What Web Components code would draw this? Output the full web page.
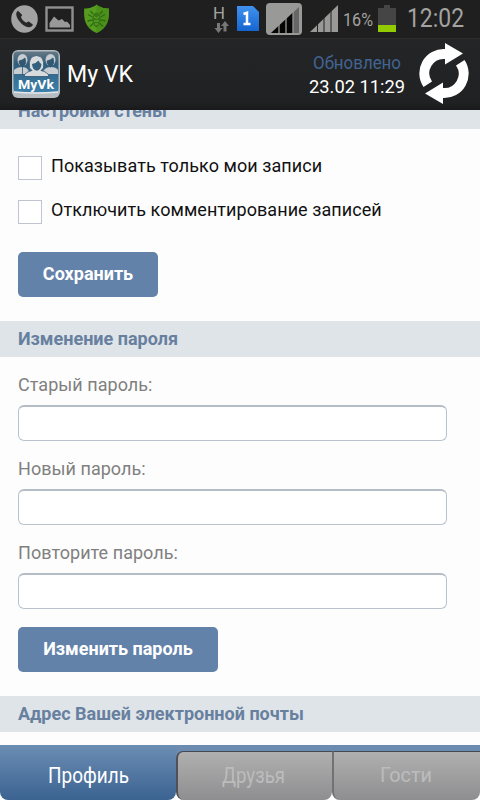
<!DOCTYPE html>
<html lang="ru">
<head>
<meta charset="UTF-8">
<title>My VK</title>
<style>
    body {
        margin: 0;
        width: 480px;
        height: 800px;
        overflow: hidden;
        background: #fdfdfd;
        font-family: Roboto, "Noto Sans", sans-serif;
    }
</style>
</head>
<body>
<vk-app></vk-app>

<script>
// Text stretched to a given width, used for all the system-font labels
class HandText extends HTMLElement {
    constructor() {
        super();
        this.attachShadow({ mode: 'open' });
    }

    connectedCallback() {
        const width = Number(this.getAttribute('width'));
        const size = Number(this.getAttribute('size'));
        const height = Math.round(size * 1.3);

        this.shadowRoot.innerHTML = `
            <style>
                :host {
                    display: block;
                    width: ${width}px;
                    height: ${height}px;
                }
                svg {
                    display: block;
                    overflow: visible;
                }
                text {
                    fill: currentColor;
                    font: 400 ${size}px Roboto, "Noto Sans", sans-serif;
                }
            </style>
            <svg width="${width}" height="${height}">
                <text x="0" y="${size}" textLength="${width}" lengthAdjust="spacingAndGlyphs">${this.getAttribute('text')}</text>
            </svg>
        `;
    }
}
customElements.define('hand-text', HandText);

class StatusBar extends HTMLElement {
    constructor() {
        super();
        this.attachShadow({ mode: 'open' });
    }

    connectedCallback() {
        this.shadowRoot.innerHTML = `
            <style>
                :host {
                    display: flex;
                    justify-content: space-between;
                    height: 38px;
                    box-sizing: border-box;
                    padding: 0 16px 0 11px;
                    background: #1f1f1f;
                    color: #a3a3a1;
                }
                .group {
                    display: flex;
                    align-items: flex-start;
                }
                svg {
                    display: block;
                    flex: none;
                }
                .phone { margin-top: 5px; }
                .picture { margin: 6px 0 0 7px; }
                .shield { margin: 4px 0 0 9px; }
                .data {
                    width: 17px;
                    margin: 2px 7px 0 0;
                }
                .data svg { margin-top: -3px; }
                .sim { margin: 6px 7px 0 0; }
                .signal-box { margin: 3px 8px 0 0; }
                .signal { margin: 5px 5px 0 0; }
                .percent { margin: 7px 5px 0 0; }
                .battery { margin: 5px 11px 0 0; }
                .clock { margin-top: 2px; }
            </style>
            <div class="group">
                <svg class="phone" width="27" height="28" viewBox="0 0 27 28">
                    <ellipse cx="13.500" cy="14" rx="13.300" ry="13.800" fill="#a3a3a3"/>
                    <path d="M7 5.800 C4.500 7.500 4.800 11 7.500 15 C10.500 19.500 15 22.500 18.500 22.200 C20.500 22 22 20.500 21.800 19.500 L17.800 16.600 C16.600 16.300 16.200 18 15 17.600 C12.700 16.500 10.500 14 9.900 12 C10 11.200 11.400 11 11 9.800 Z" fill="#272727"/>
                </svg>
                <svg class="picture" width="29" height="26" viewBox="0 0 29 26">
                    <rect x="1.500" y="1.500" width="26" height="23" fill="none" stroke="#909090" stroke-width="2.400"/>
                    <path d="M4.500 21.500 V17 L9 10.500 L13.500 14.500 L17 13 L20 16 L22 15.500 L25 19 V21.500 Z" fill="#999"/>
                </svg>
                <svg class="shield" width="27" height="30" viewBox="0 0 27 30">
                    <path d="M13.500 .5 C16 3 21 4.500 25.800 4.500 C26.500 15 25 24 13.500 29 C2 24 .5 15 1.200 4.500 C6 4.500 11 3 13.500 .5 Z" fill="#559c20"/>
                    <path d="M13.500 .5 C16 3 21 4.500 25.800 4.500 C26.500 15 25 24 13.500 29 Z" fill="#4a9019"/>
                    <path d="M10.500 10 Q13.500 7 16.500 10 L18 16 Q17 22 13.500 23.500 Q10 22 9 16 Z" fill="#387815"/>
                    <path d="M10 10 L7.500 7 M17 10 L19.500 7 M9.500 13 L5 10.500 M17.500 13 L22 10.500 M9 16 L4.500 17 M18 16 L22.500 17 M10 19.500 L7 22.500 M17 19.500 L20 22.500" fill="none" stroke="#2f6c10" stroke-width="1.300"/>
                    <path d="M11 12.500 L13.500 14.500 L16 12.500 M11 17 H16 M12 20 H15" fill="none" stroke="#68ae2c"/>
                </svg>
            </div>
            <div class="group">
                <div class="data">
                    <hand-text text="H" size="17" width="12"></hand-text>
                    <svg width="17" height="13" viewBox="0 0 17 13" fill="#777">
                        <path d="M4 2 H7 V7 H9.500 L5.500 12 L1.500 7 H4 Z M10.500 10.500 H13.500 V5 H16 L12 0 L8 5 H10.500 Z"/>
                    </svg>
                </div>
                <svg class="sim" width="22" height="25" viewBox="0 0 22 25">
                    <defs>
                        <linearGradient id="simFill" x2="0" y2="1">
                            <stop stop-color="#4092ef"/>
                            <stop offset="1" stop-color="#1565d0"/>
                        </linearGradient>
                    </defs>
                    <path d="M0 0 H16 L22 6 V25 H0 Z" fill="url(#simFill)"/>
                    <path d="M6.500 8 L10 6.800 V18 M6.500 18 H13.500" fill="none" stroke="#fff" stroke-width="2.500"/>
                </svg>
                <svg class="signal-box" width="36" height="32" viewBox="0 0 36 32">
                    <rect width="36" height="32" rx="4" fill="#999a97"/>
                    <path d="M33 4 V30 H5 Z" fill="#666"/>
                    <path d="M5 30 L27 9.500 V30 Z" fill="#050505"/>
                    <path d="M13 20 V30 M20 14 V30 M27 8 V30" stroke="#999a97" stroke-width="1.300"/>
                </svg>
                <svg class="signal" width="28" height="27" viewBox="0 0 28 27">
                    <path d="M28 0 V27 H0 Z" fill="#999a97"/>
                    <path d="M7.500 19 V27 M14 12 V27 M21 6 V27" stroke="#222" stroke-width="1"/>
                </svg>
                <hand-text class="percent" text="16%" size="19" width="30"></hand-text>
                <svg class="battery" width="18" height="27" viewBox="0 0 18 27">
                    <path d="M6 0 H12 V3 H18 V20 H0 V3 H6 Z" fill="#454545"/>
                    <rect y="20" width="18" height="7" fill="#91cb00"/>
                </svg>
                <hand-text class="clock" text="12:02" size="25" width="57"></hand-text>
            </div>
        `;
    }
}
customElements.define('status-bar', StatusBar);

class AppHeader extends HTMLElement {
    constructor() {
        super();
        this.attachShadow({ mode: 'open' });
    }

    connectedCallback() {
        this.shadowRoot.innerHTML = `
            <style>
                :host {
                    display: flex;
                    height: 72px;
                    box-sizing: border-box;
                    padding: 0 10px 0 12px;
                    border-top: 1px solid #302c2e;
                    background: linear-gradient(#242526, #202122 90%, #19191c);
                    color: #fff;
                }
                svg {
                    display: block;
                    flex: none;
                }
                .logo { margin: 11px 7px 0 0; }
                .title { margin-top: 20px; }
                .updated {
                    display: flex;
                    flex-direction: column;
                    align-items: center;
                    margin: 11px 13px 0 auto;
                }
                .label { color: #426492; }
                .date { margin-top: -1px; }
                .refresh { margin-top: 3px; }
            </style>
            <svg class="logo" width="48" height="48" viewBox="0 0 48 48">
                <defs>
                    <linearGradient id="logoFill" x2="0" y2="1">
                        <stop stop-color="#667884"/>
                        <stop offset=".3" stop-color="#315d7b"/>
                        <stop offset="1" stop-color="#3c81ac"/>
                    </linearGradient>
                </defs>
                <rect width="48" height="48" rx="6" fill="#b5bdc3"/>
                <rect x="1.500" y="1.500" width="45" height="41" rx="4" fill="url(#logoFill)"/>
                <g fill="#c8cdd1">
                    <path d="M2 24 V20 Q5 17 10.500 17 Q16 17 18 24 Z M30 24 Q32 17 38.500 17 Q44 17 46 20 V24 Z"/>
                    <ellipse cx="10.500" cy="10" rx="5" ry="6"/>
                    <ellipse cx="38.500" cy="10" rx="5" ry="6"/>
                </g>
                <path d="M7 11 Q11 10 13 8 Q15 13 12 16 L10.500 17 Q7 15 7 11 M35 11 Q39 10 41 8 Q43 13 40 16 L38.500 17 Q35 15 35 11 M10.500 16 V25" fill="#315870" stroke="#315870" stroke-width=".8"/>
                <path d="M12 26.500 Q13 22 20 20.500 L17.500 18 Q16 6 24.500 5.500 Q33 6 31.500 18 L29 20.500 Q36 22 37 26.500 Z" fill="#d8dbde" stroke="#31566d" stroke-width=".8"/>
                <path d="M20 14 Q24 13.500 26.500 10.500 Q27.500 13 29.500 14 Q29 20 24.800 20.800 Q20.500 20 20 14" fill="#315f7c"/>
                <text x="6" y="38.500" textLength="36" lengthAdjust="spacingAndGlyphs" fill="#fff" font-family="Roboto, sans-serif" font-weight="700" font-size="13">MyVk</text>
                <path d="M2 42 Q24 44 46 42" fill="none" stroke="#e4e8ea" stroke-width="1.500"/>
            </svg>
            <hand-text class="title" text="My VK" size="23" width="66"></hand-text>
            <div class="updated">
                <hand-text class="label" text="Обновлено" size="19" width="88"></hand-text>
                <hand-text class="date" text="23.02 11:29" size="19" width="96"></hand-text>
            </div>
            <svg class="refresh" width="52" height="64" viewBox="0 0 52 64" fill="#fff">
                <path id="arrow" d="M27 1 L45 11.500 L27 22.500 V17 A14.300 14.300 0 0 0 14 39.500 L5.500 45 A24.400 24.400 0 0 1 27 7 Z"/>
                <use href="#arrow" transform="rotate(180 26 31.500)"/>
            </svg>
        `;
    }
}
customElements.define('app-header', AppHeader);

class SectionTitle extends HTMLElement {
    constructor() {
        super();
        this.attachShadow({ mode: 'open' });
        this.shadowRoot.innerHTML = `
            <style>
                :host {
                    display: block;
                    height: 36px;
                    box-sizing: border-box;
                    padding-left: 18px;
                    background: #dfe4e8;
                    color: #67809f;
                    font-size: 18px;
                    font-weight: 700;
                    line-height: 35px;
                    white-space: nowrap;
                }
            </style>
            <slot></slot>
        `;
    }
}
customElements.define('section-title', SectionTitle);

class CheckRow extends HTMLElement {
    constructor() {
        super();
        this.attachShadow({ mode: 'open' });
        this.shadowRoot.innerHTML = `
            <style>
                :host {
                    display: flex;
                    gap: 9px;
                    height: 24px;
                    color: #111;
                    font-size: 18px;
                    letter-spacing: 0.06px;
                    line-height: 20px;
                    white-space: nowrap;
                }
                .box {
                    width: 24px;
                    height: 24px;
                    box-sizing: border-box;
                    border: 1px solid #bfc4d0;
                    background: #fff;
                }
            </style>
            <div class="box"></div>
            <slot></slot>
        `;
    }
}
customElements.define('check-row', CheckRow);

class PasswordField extends HTMLElement {
    constructor() {
        super();
        this.attachShadow({ mode: 'open' });
        this.shadowRoot.innerHTML = `
            <style>
                :host {
                    display: block;
                    color: #808080;
                    font-size: 18px;
                    letter-spacing: 0.04px;
                    line-height: 24px;
                }
                .box {
                    width: 429px;
                    height: 36px;
                    margin-top: 8px;
                    box-sizing: border-box;
                    border: 1px solid #b9c3ce;
                    border-top: 2px solid #b4bdc6;
                    border-radius: 6px;
                    background: #fff;
                }
            </style>
            <slot></slot>
            <div class="box"></div>
        `;
    }
}
customElements.define('password-field', PasswordField);

class VkButton extends HTMLElement {
    constructor() {
        super();
        this.attachShadow({ mode: 'open' });
        this.shadowRoot.innerHTML = `
            <style>
                :host {
                    display: block;
                    height: 45px;
                    border-radius: 5px;
                    background: #6382aa;
                    color: #fff;
                    font-size: 18px;
                    font-weight: 700;
                    line-height: 44px;
                    text-align: center;
                    white-space: nowrap;
                }
            </style>
            <slot></slot>
        `;
    }
}
customElements.define('vk-button', VkButton);

class TabItem extends HTMLElement {
    constructor() {
        super();
        this.attachShadow({ mode: 'open' });
    }

    connectedCallback() {
        this.shadowRoot.innerHTML = `
            <style>
                :host {
                    display: flex;
                    justify-content: center;
                    align-items: flex-start;
                    flex: none;
                    box-sizing: border-box;
                    height: 49px;
                    margin-top: 6px;
                    padding: 9px 3px 0 0;
                    border-top: 1px solid #454b55;
                    border-left: 2px solid #727274;
                    border-radius: 0 0 8px 8px;
                    background: linear-gradient(#b0b0b0, #8e8e90);
                    color: #bcbcbc;
                }
                :host(.first) {
                    border-left-color: #505157;
                    border-radius: 7px 0 8px 8px;
                }
                :host([active]) {
                    height: 55px;
                    margin-top: 0;
                    padding: 16px 0 0;
                    border: 0;
                    background: linear-gradient(#6b8db3, #3b6391);
                    color: #fff;
                }
            </style>
            <slot></slot>
        `;
    }
}
customElements.define('tab-item', TabItem);

class TabBar extends HTMLElement {
    constructor() {
        super();
        this.attachShadow({ mode: 'open' });
        this.shadowRoot.innerHTML = `
            <style>
                :host {
                    display: flex;
                    height: 55px;
                    background: linear-gradient(#6b8bb1 16px, #fff 16px);
                }
            </style>
            <slot></slot>
        `;
    }
}
customElements.define('tab-bar', TabBar);

class VkApp extends HTMLElement {
    constructor() {
        super();
        this.attachShadow({ mode: 'open' });
    }

    connectedCallback() {
        this.shadowRoot.innerHTML = `
            <style>
                :host {
                    display: flex;
                    flex-direction: column;
                    height: 800px;
                }
                main {
                    flex: 1;
                    display: flex;
                    flex-direction: column;
                    justify-content: flex-end;
                    min-height: 0;
                    overflow: hidden;
                }
                section-title { flex: none; }
                .wall {
                    display: flex;
                    flex-direction: column;
                    gap: 20px;
                    padding: 27px 18px 24px;
                }
                .wall vk-button {
                    width: 140px;
                    margin-top: 8px;
                }
                .password {
                    display: flex;
                    flex-direction: column;
                    gap: 16px;
                    padding: 16px 18px 24px;
                }
                .password vk-button {
                    width: 200px;
                    margin-top: 2px;
                }
                .mail { margin-bottom: 13px; }
            </style>
            <status-bar></status-bar>
            <app-header></app-header>
            <main>
                <section-title>Настройки стены</section-title>
                <div class="wall">
                    <check-row>Показывать только мои записи</check-row>
                    <check-row>Отключить комментирование записей</check-row>
                    <vk-button>Сохранить</vk-button>
                </div>
                <section-title>Изменение пароля</section-title>
                <div class="password">
                    <password-field>Старый пароль:</password-field>
                    <password-field>Новый пароль:</password-field>
                    <password-field>Повторите пароль:</password-field>
                    <vk-button>Изменить пароль</vk-button>
                </div>
                <section-title class="mail">Адрес Вашей электронной почты</section-title>
            </main>
            <tab-bar>
                <tab-item active style="width: 176px">
                    <hand-text text="Профиль" size="22" width="81"></hand-text>
                </tab-item>
                <tab-item class="first" style="width: 156px">
                    <hand-text text="Друзья" size="22" width="63"></hand-text>
                </tab-item>
                <tab-item style="width: 148px">
                    <hand-text text="Гости" size="21" width="52"></hand-text>
                </tab-item>
            </tab-bar>
        `;
    }
}
customElements.define('vk-app', VkApp);
</script>
</body>
</html>
